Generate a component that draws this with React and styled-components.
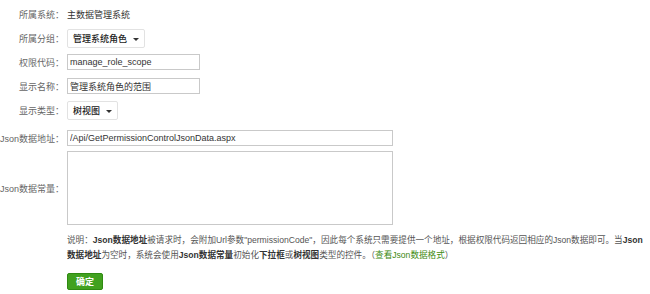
import React from 'react';
import styled, { createGlobalStyle } from 'styled-components';

const GlobalStyle = createGlobalStyle`
  body {
    margin: 0;
    background: #fff;
    font-family: "Liberation Sans", "Noto Sans CJK SC", sans-serif;
    font-size: 9px;
    color: #333;
    overflow: hidden;
  }
`;

const StyledForm = styled.div`
  display: flex;
  flex-direction: column;
  padding-top: 2px;
`;

const StyledRow = styled.div`
  display: flex;
  align-items: center;
  min-height: ${(props) => props.$height || 24}px;
  margin-top: ${(props) => props.$offset || 0}px;
`;

const StyledLabel = styled.div`
  width: 64px;
  padding-right: 3px;
  text-align: right;
  color: #666;
  white-space: nowrap;
  flex-shrink: 0;
`;

const StyledValue = styled.div`
  color: #333;
`;

const StyledSelect = styled.div`
  display: flex;
  align-items: center;
  gap: 6px;
  height: 17px;
  padding: 0 5px;
  border: 1px solid #e2e2e2;
  border-radius: 2px;
  color: #222;
  font-weight: 500;
  background: #fff;
`;

const StyledCaret = styled.span`
  width: 0;
  height: 0;
  margin-top: 3px;
  border-left: 3px solid transparent;
  border-right: 3px solid transparent;
  border-top: 3px solid #333;
`;

const StyledInput = styled.input`
  box-sizing: border-box;
  width: ${(props) => props.$width}px;
  height: 16px;
  padding: 0 2px;
  border: 1px solid #c9c9c9;
  font-family: inherit;
  font-size: 9px;
  color: #333;
  outline: none;
`;

const StyledTextarea = styled.textarea`
  box-sizing: border-box;
  width: 326px;
  height: 74px;
  border: 1px solid #c9c9c9;
  resize: none;
  outline: none;
  margin: 0;
`;

const StyledNote = styled.div`
  margin: 8px 0 0 67px;
  width: 583px;
  font-size: 8.6px;
  line-height: 15px;
  color: #555;
  & b {
    color: #333;
  }
`;

const StyledLink = styled.span`
  color: #3d8a0f;
`;

const StyledButton = styled.button`
  margin: 10px 0 0 67px;
  width: 36px;
  height: 17px;
  padding: 0;
  border: 1px solid #2f8a12;
  border-radius: 2px;
  background: #41a11f;
  color: #fff;
  font-family: inherit;
  font-size: 9px;
  font-weight: bold;
  align-self: flex-start;
`;

const App = () => (
  <>
    <GlobalStyle />
    <StyledForm>
      <StyledRow>
        <StyledLabel>所属系统：</StyledLabel>
        <StyledValue>主数据管理系统</StyledValue>
      </StyledRow>
      <StyledRow>
        <StyledLabel>所属分组：</StyledLabel>
        <StyledSelect>
          管理系统角色
          <StyledCaret />
        </StyledSelect>
      </StyledRow>
      <StyledRow>
        <StyledLabel>权限代码：</StyledLabel>
        <StyledInput $width={133} defaultValue="manage_role_scope" />
      </StyledRow>
      <StyledRow>
        <StyledLabel>显示名称：</StyledLabel>
        <StyledInput $width={133} defaultValue="管理系统角色的范围" />
      </StyledRow>
      <StyledRow>
        <StyledLabel>显示类型：</StyledLabel>
        <StyledSelect>
          树视图
          <StyledCaret />
        </StyledSelect>
      </StyledRow>
      <StyledRow $offset={4}>
        <StyledLabel>Json数据地址：</StyledLabel>
        <StyledInput $width={326} defaultValue="/Api/GetPermissionControlJsonData.aspx" />
      </StyledRow>
      <StyledRow $offset={1} $height={74}>
        <StyledLabel>Json数据常量：</StyledLabel>
        <StyledTextarea />
      </StyledRow>
      <StyledNote>
        说明：<b>Json数据地址</b>被请求时，会附加Url参数"permissionCode"，因此每个系统只需要提供一个地址，根据权限代码返回相应的Json数据即可。当<b>Json数据地址</b>为空时，系统会使用<b>Json数据常量</b>初始化<b>下拉框</b>或<b>树视图</b>类型的控件。（<StyledLink>查看Json数据格式</StyledLink>）
      </StyledNote>
      <StyledButton>确定</StyledButton>
    </StyledForm>
  </>
);

export default App;
